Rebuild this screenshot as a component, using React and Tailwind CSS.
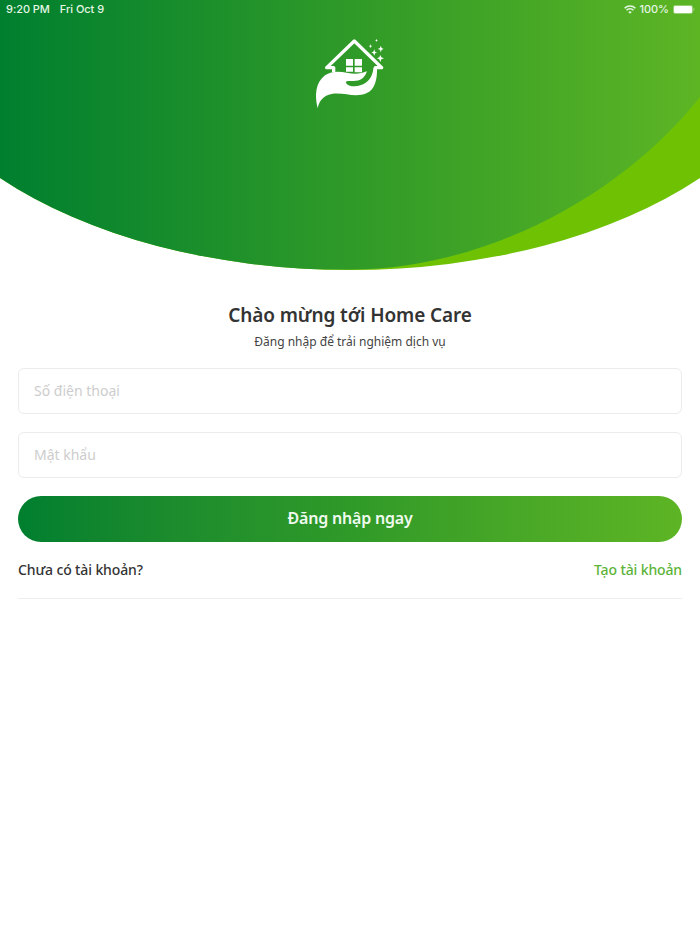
const field =
  "h-[46px] w-full rounded-md border border-[#ececec] bg-white px-[15px] pb-[2px] text-[14px] outline-none placeholder:text-[#cdcdcd] placeholder:opacity-100";

function StatusBar() {
  return (
    <div className="flex h-[19px] items-center justify-between pl-[6px] pr-[5px] font-['Inter','Liberation_Sans',sans-serif] text-[11px] font-medium tracking-[-0.05px] text-[#e4f6e4]">
      <div className="flex gap-[10px]">
        <span>9:20 PM</span>
        <span>Fri Oct 9</span>
      </div>
      <div className="flex items-center gap-[4px]">
        <svg className="h-[9px] w-[12px]" viewBox="0 0 12 9" fill="none" stroke="currentColor" strokeWidth="1.6">
          <path d="M.6 3.2a7.7 7.7 0 0 1 10.8 0M2.5 5.3a5 5 0 0 1 7 0" />
          <path d="M6 8.8 4.2 7a2.6 2.6 0 0 1 3.6 0z" fill="currentColor" stroke="none" />
        </svg>
        <span>100%</span>
        <svg className="h-[9px] w-[22px]" viewBox="0 0 22 9">
          <rect x=".4" y=".4" width="19.2" height="8.2" rx="2" fill="none" stroke="#fff" strokeOpacity=".5" strokeWidth=".8" />
          <rect x="1" y="1" width="18" height="7" rx="1.2" fill="#fff" />
          <path d="M20.6 3v3c1-.4 1-2.600 0-3" fill="#fff" fillOpacity=".6" />
        </svg>
      </div>
    </div>
  );
}

function Logo() {
  return (
    <svg className="h-[90px] w-[100px]" viewBox="0 0 300 270" fill="#fff">
      <path d="M101 126v-13H80l83-80 82 80h-19v10" fill="none" stroke="#fff" strokeWidth="10" strokeLinejoin="round" />
      <path d="M138 87h21v20h-21zM164 87h22v20h-22zM138 112h21v13h-21zM164 112h22v15h-22z" />
      <path d="M53 235C43 195 47 157 75 136c20-14 43-12 65-8 22 4 39 5 61-4-8 23-22 30-44 29-13 0-19-1-19 5 3 9 25 15 43 8 25-9 36-25 40-53h10c1 36-6 65-32 77-34 15-68-4-104 2-25 5-37 20-42 43z" />
      <path d="m229 27 2 3 3 1-3 1-2 4-1-4-3-1 3-1zM212 42l1 5 4 1-4 2-1 5-2-5-4-2 4-1zM242 47l3 7 6 3-6 2-3 8-2-8-7-2 7-3zM223 58l2 7 6 3-6 2-2 7-3-7-6-2 6-3zM241 75l3 7 8 3-8 3-3 8-3-8-7-3 7-3z" />
    </svg>
  );
}

function Header() {
  return (
    <header className="relative h-[271px]">
      <svg className="absolute inset-0 h-[271px] w-full" viewBox="0 0 700 271">
        <defs>
          <linearGradient id="leaf">
            <stop offset="0" stopColor="#007f2f" />
            <stop offset=".5" stopColor="#2f9a28" />
            <stop offset="1" stopColor="#5db524" />
          </linearGradient>
          <clipPath id="dome">
            <path d="M0 0H700V178A460 262 0 0 1 0 178z" />
          </clipPath>
        </defs>
        <g clipPath="url(#dome)">
          <path d="M0 0H700V271H0z" fill="#6ec203" />
          <path d="M0 0H700V97C625 192 490 269 350 269.500H0z" fill="url(#leaf)" />
        </g>
      </svg>
      <div className="relative">
        <StatusBar />
        <div className="flex justify-center pt-[11px]">
          <Logo />
        </div>
      </div>
    </header>
  );
}

export default function App() {
  return (
    <div className="min-h-[934px] bg-white font-['Noto_Sans','Open_Sans',sans-serif] text-[#333]">
      <Header />
      <main className="px-[18px]">
        <h1 className="mt-[30px] text-center text-[19px] leading-[28px] font-semibold tracking-[-0.11px]">
          Chào mừng tới Home Care
        </h1>
        <p className="mt-[4px] text-center text-[12px] leading-[18px] text-[#444]">Đăng nhập để trải nghiệm dịch vụ</p>
        <form className="mt-[17px] flex flex-col gap-[18px]">
          <input className={field} placeholder="Số điện thoại" />
          <input className={field} type="password" placeholder="Mật khẩu" />
          <button
            type="button"
            className="h-[46px] rounded-full bg-linear-to-r from-[#007f2f] via-[#2f9a28] to-[#5db524] pb-[2px] text-[16px] font-semibold tracking-[-0.2px] text-[#effaef]"
          >
            Đăng nhập ngay
          </button>
        </form>
        <div className="mt-[17px] flex h-[40px] justify-between border-b border-[#eee] text-[14px] leading-[21px] font-medium tracking-[-0.13px]">
          <span>Chưa có tài khoản?</span>
          <a className="text-[#5cb338]">Tạo tài khoản</a>
        </div>
      </main>
    </div>
  );
}
